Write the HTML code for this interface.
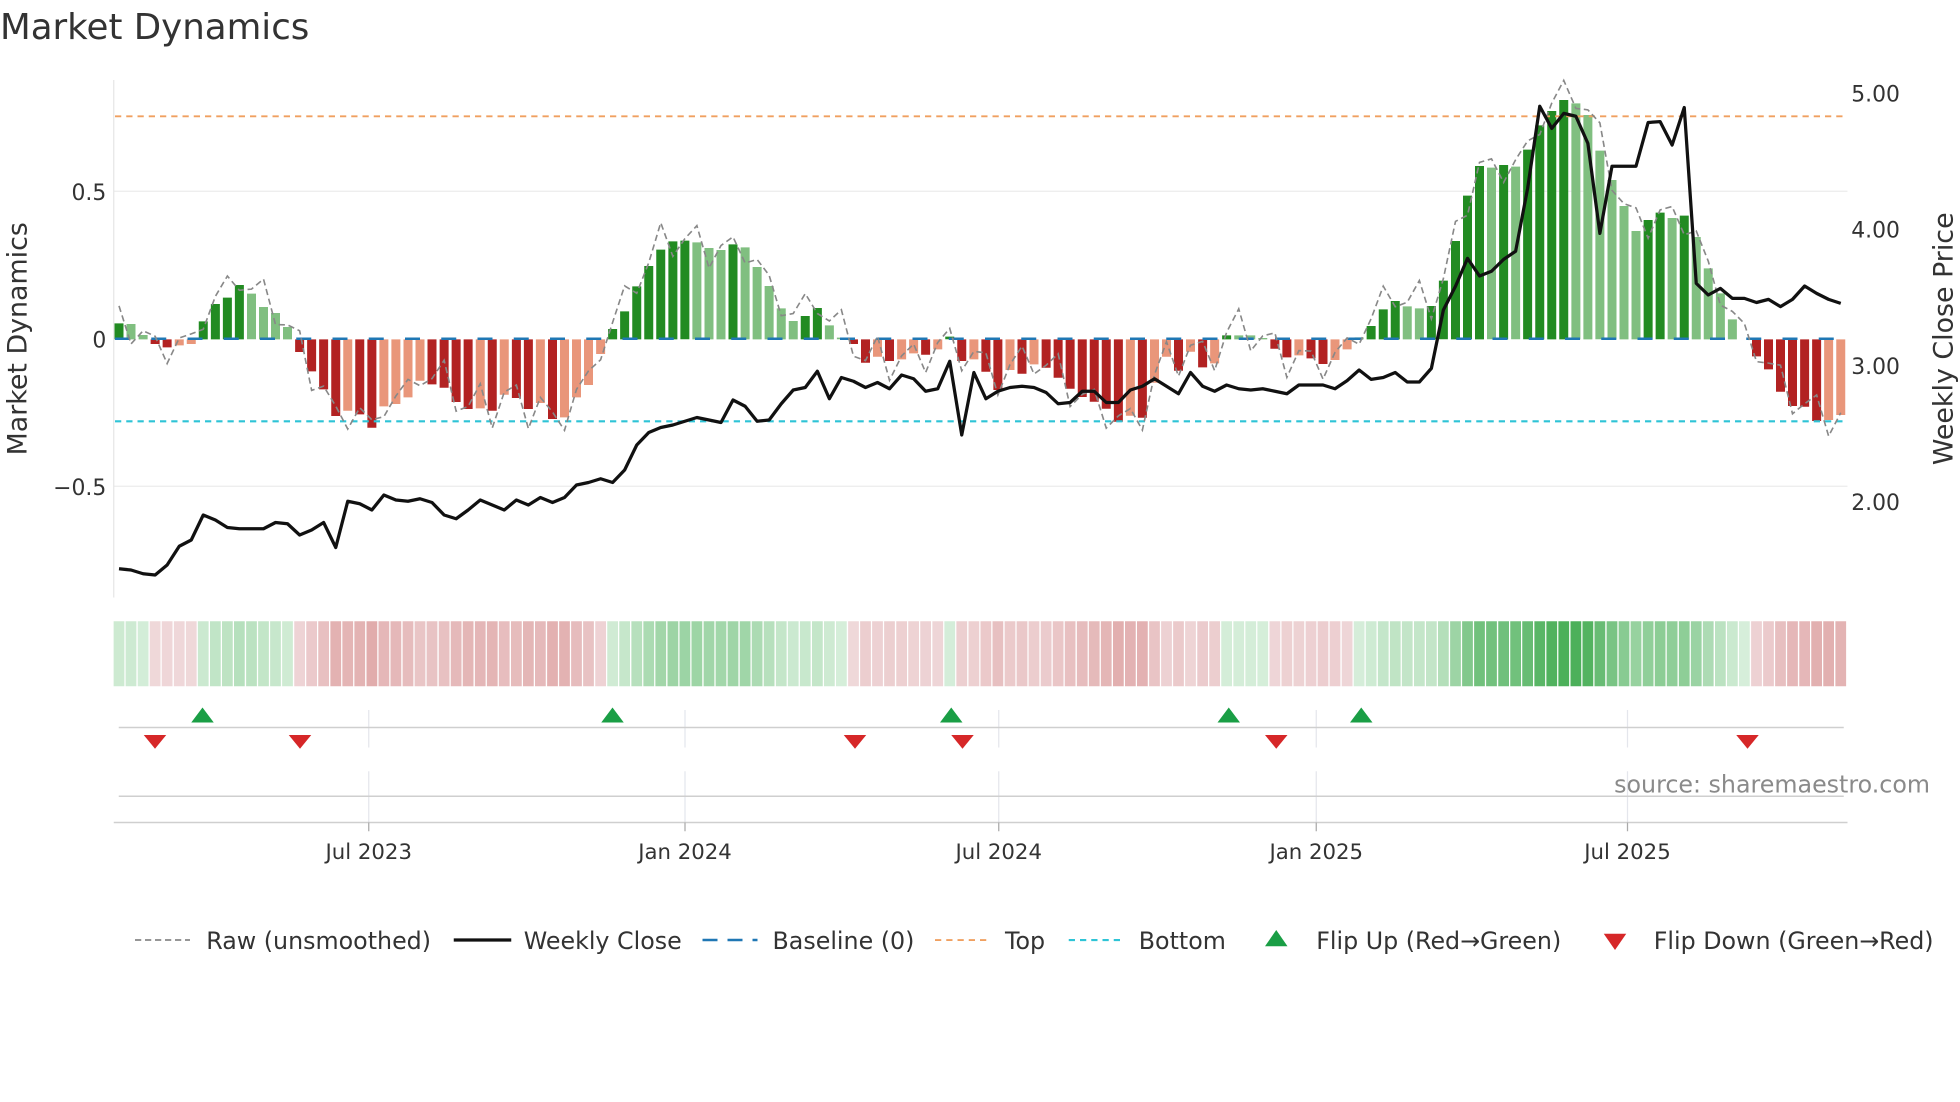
<!DOCTYPE html>
<html><head><meta charset="utf-8"><style>
html,body{margin:0;padding:0;background:#fff;}
svg{display:block;font-family:"DejaVu Sans","Liberation Sans",sans-serif;}
</style></head><body>
<svg id="s" width="1960" height="1102" viewBox="0 0 1568 881.6" xmlns="http://www.w3.org/2000/svg">
<rect width="1568" height="882" fill="#fff"/>
<text x="0" y="31" font-size="28.5" fill="#333">Market Dynamics</text>
<g stroke="#ececec" stroke-width="1">
<line x1="91" y1="153" x2="1478" y2="153"/><line x1="91" y1="389" x2="1478" y2="389"/>
</g>
<line x1="91" y1="64" x2="91" y2="478" stroke="#e6e6e6"/>
<g font-size="17.5" fill="#333">
<text x="85" y="160" text-anchor="end">0.5</text>
<text x="85" y="278" text-anchor="end">0</text>
<text x="85" y="396" text-anchor="end">−0.5</text>
<text x="1481" y="81">5.00</text>
<text x="1481" y="190">4.00</text>
<text x="1481" y="299">3.00</text>
<text x="1481" y="408">2.00</text>
</g>
<text transform="translate(21,271) rotate(-90)" font-size="21.5" fill="#333" text-anchor="middle">Market Dynamics</text>
<text transform="translate(1562,271) rotate(-90)" font-size="21.5" fill="#333" text-anchor="middle">Weekly Close Price</text>
<g id="bars"></g>
<line x1="92" y1="271" x2="1478" y2="271" stroke="#1f77b4" stroke-width="2" stroke-dasharray="12,17"/>
<line x1="92" y1="93" x2="1478" y2="93" stroke="#f0a060" stroke-width="1.5" stroke-dasharray="5,4"/>
<line x1="92" y1="337" x2="1478" y2="337" stroke="#2ec4d6" stroke-width="1.7" stroke-dasharray="5,4"/>
<polyline id="raw" fill="none" stroke="#888" stroke-width="1.3" stroke-dasharray="5,3"/>
<polyline id="price" fill="none" stroke="#111" stroke-width="2.6" stroke-linejoin="round"/>
<g id="heat"></g>
<g stroke="#e4e6ec" stroke-width="1">
<line x1="295" y1="568" x2="295" y2="598"/><line x1="548" y1="568" x2="548" y2="598"/><line x1="799" y1="568" x2="799" y2="598"/><line x1="1053" y1="568" x2="1053" y2="598"/><line x1="1302" y1="568" x2="1302" y2="598"/>
<line x1="295" y1="617" x2="295" y2="658"/><line x1="548" y1="617" x2="548" y2="658"/><line x1="799" y1="617" x2="799" y2="658"/><line x1="1053" y1="617" x2="1053" y2="658"/><line x1="1302" y1="617" x2="1302" y2="658"/>
</g>
<line x1="95" y1="582" x2="1475" y2="582" stroke="#cfcfcf" stroke-width="1.2"/>
<line x1="95" y1="637" x2="1475" y2="637" stroke="#cfcfcf" stroke-width="1.2"/>
<line x1="91" y1="658" x2="1478" y2="658" stroke="#cfcfcf" stroke-width="1.2"/>
<g stroke="#aaa"><line x1="295" y1="658" x2="295" y2="665"/><line x1="548" y1="658" x2="548" y2="665"/><line x1="799" y1="658" x2="799" y2="665"/><line x1="1053" y1="658" x2="1053" y2="665"/><line x1="1302" y1="658" x2="1302" y2="665"/></g>
<g id="flips"></g>
<g font-size="17" fill="#333" text-anchor="middle">
<text x="295" y="687">Jul 2023</text><text x="548" y="687">Jan 2024</text><text x="799" y="687">Jul 2024</text><text x="1053" y="687">Jan 2025</text><text x="1302" y="687">Jul 2025</text>
</g>
<text x="1544" y="634" font-size="19" fill="#8a8a8a" text-anchor="end">source: sharemaestro.com</text>
<g font-size="19" fill="#333">
<line x1="108" y1="752" x2="152" y2="752" stroke="#888" stroke-width="1.4" stroke-dasharray="5,3"/>
<text x="165" y="759">Raw (unsmoothed)</text>
<line x1="363" y1="752" x2="409" y2="752" stroke="#111" stroke-width="2.6"/>
<text x="419" y="759">Weekly Close</text>
<line x1="562" y1="752" x2="606" y2="752" stroke="#1f77b4" stroke-width="2" stroke-dasharray="12,8"/>
<text x="618" y="759">Baseline (0)</text>
<line x1="748" y1="752" x2="792" y2="752" stroke="#f0a060" stroke-width="1.5" stroke-dasharray="5,4"/>
<text x="804" y="759">Top</text>
<line x1="855" y1="752" x2="899" y2="752" stroke="#2ec4d6" stroke-width="1.7" stroke-dasharray="5,4"/>
<text x="911" y="759">Bottom</text>
<polygon points="1012,757 1030,757 1021,744" fill="#1a9e45"/>
<text x="1053" y="759">Flip Up (Red→Green)</text>
<polygon points="1283,747 1301,747 1292,760" fill="#d62728"/>
<text x="1323" y="759">Flip Down (Green→Red)</text>
</g>
</svg>
<script>
var D=[[790,'g'],[792,'l'],[825,'l'],[852,'r'],[862,'r'],[856,'s'],[852,'s'],[784,'g'],[732,'g'],[713,'g'],[675,'g'],[701,'l'],[741,'l'],[759,'l'],[801,'l'],[876,'r'],[934,'r'],[988,'r'],[1068,'r'],[1052,'s'],[1063,'r'],[1103,'r'],[1039,'s'],[1032,'s'],[1012,'s'],[962,'s'],[973,'r'],[983,'r'],[1026,'r'],[1047,'r'],[1045,'s'],[1052,'r'],[1004,'s'],[1014,'r'],[1047,'r'],[1029,'s'],[1077,'r'],[1072,'s'],[1012,'s'],[975,'s'],[882,'s'],[807,'g'],[754,'g'],[679,'g'],[618,'g'],[569,'g'],[544,'g'],[542,'g'],[547,'l'],[564,'l'],[570,'l'],[553,'g'],[562,'l'],[621,'l'],[678,'l'],[745,'l'],[783,'l'],[768,'g'],[744,'g'],[796,'l'],[833,'l'],[852,'r'],[908,'r'],[890,'s'],[903,'r'],[898,'s'],[880,'s'],[884,'r'],[868,'s'],[830,'g'],[903,'r'],[898,'s'],[935,'r'],[990,'r'],[930,'s'],[941,'r'],[913,'s'],[923,'r'],[953,'r'],[986,'r'],[1011,'r'],[1025,'r'],[1046,'r'],[1085,'r'],[1067,'s'],[1073,'r'],[968,'s'],[890,'s'],[932,'r'],[875,'s'],[922,'r'],[910,'s'],[826,'g'],[826,'l'],[826,'l'],[834,'l'],[866,'r'],[892,'r'],[886,'s'],[895,'r'],[912,'r'],[900,'s'],[868,'s'],[832,'l'],[798,'g'],[748,'g'],[723,'g'],[739,'l'],[745,'l'],[738,'g'],[662,'g'],[543,'g'],[407,'g'],[318,'g'],[323,'l'],[315,'g'],[320,'l'],[269,'g'],[196,'g'],[153,'g'],[120,'g'],[130,'l'],[165,'l'],[272,'l'],[360,'l'],[438,'l'],[513,'l'],[480,'g'],[458,'g'],[474,'l'],[467,'g'],[531,'l'],[625,'l'],[700,'l'],[778,'l'],[838,'l'],[889,'r'],[928,'r'],[995,'r'],[1038,'r'],[1040,'r'],[1083,'r'],[1080,'s'],[1065,'s']];
var P=[455,456,459,460,452,437,432,412,416,422,423,423,423,418,419,428,424,418,438,401,403,408,396,400,401,399,402,412,415,408,400,404,408,400,404,398,402,398,388,386,383,386,376,356,346,342,340,337,334,336,338,320,325,337,336,323,312,310,297,319,302,305,310,306,311,300,303,313,311,289,348,298,319,313,310,309,310,314,323,322,313,313,322,322,312,309,303,309,315,298,309,313,308,311,312,311,313,315,308,308,308,311,304.5,296,303.5,302,298,305.6,305.6,294.7,248,229,206.7,220.8,217,207.5,201,150.7,85,102.7,90.7,93,114.7,186.7,133,133,133,98,97.3,116,86,226.7,236,230.7,238.7,238.7,242,239.5,245.3,239.5,228.8,234.7,239.5,242.7];
var C={g:'#228b22',l:'#80bf80',r:'#b22222',s:'#e9967a'};
var b='',h='',pp=[],rp=[];
function X(i){return 95.2+i*9.632;}
for(var i=0;i<D.length;i++){
 var zy=D[i][0],y=48+zy/3.75,z=48+838/3.75,x=X(i);
 var t=Math.min(y,z),hh=Math.abs(y-z);
 if(hh>0.3) b+='<rect x="'+(x-3.6).toFixed(1)+'" y="'+t.toFixed(1)+'" width="7.2" height="'+hh.toFixed(1)+'" fill="'+C[D[i][1]]+'"/>';
 var v=(838-zy)/886,a=Math.min(1,Math.abs(v)/0.8);
 var ar=Math.min(1,Math.abs(v)/0.3);
 var col=v>=0?'rgb('+Math.round(214-138*a)+','+Math.round(238-62*a)+','+Math.round(218-128*a)+')':'rgb('+Math.round(240-15*ar)+','+Math.round(218-46*ar)+','+Math.round(220-48*ar)+')';
 h+='<rect x="'+(x-4.3).toFixed(1)+'" y="497" width="8.6" height="52" fill="'+col+'"/>';
 pp.push(x.toFixed(1)+','+P[i]);
 var w=(i%3==0?-14:(i%3==1?10:-4))*(1+0.6*Math.sin(i*1.7));
 rp.push(x.toFixed(1)+','+(y+w).toFixed(1));
}
document.getElementById('bars').innerHTML=b;
document.getElementById('heat').innerHTML=h;
document.getElementById('price').setAttribute('points',pp.join(' '));
document.getElementById('raw').setAttribute('points',rp.join(' '));
var f='';
[162,490,761,983,1089].forEach(function(x){f+='<polygon points="'+(x-9)+',578 '+(x+9)+',578 '+x+',566" fill="#1a9e45"/>';});
[124,240,684,770,1021,1398].forEach(function(x){f+='<polygon points="'+(x-9)+',588 '+(x+9)+',588 '+x+',599" fill="#d62728"/>';});
document.getElementById('flips').innerHTML=f;
</script>
</body></html>
